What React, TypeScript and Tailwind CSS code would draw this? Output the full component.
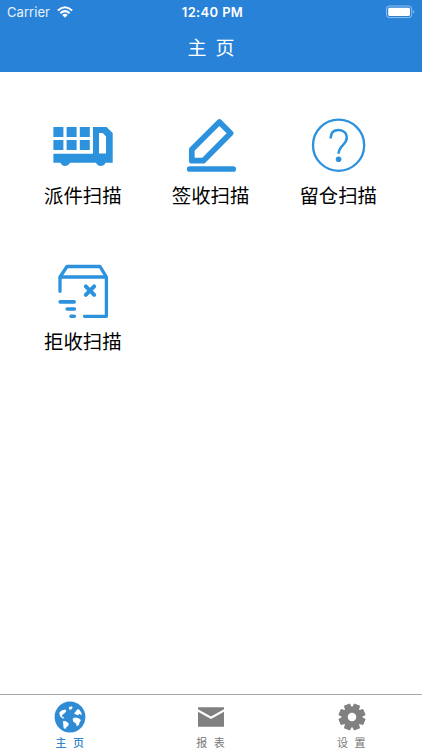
import type { ReactNode } from 'react';

const BLUE = '#2d92dd';

function TruckIcon() {
  return (
    <svg width="64" height="64" viewBox="0 0 64 64" fill={BLUE}>
      {[2.4, 15.6, 28.8].map((x) =>
        [14, 27].map((y) => <rect key={`${x}-${y}`} x={x} y={y} width="10" height="10" />),
      )}
      <path
        fillRule="evenodd"
        d="M2.4 40.8H42V14H55.5L61.7 20V49.7H54.5Q53 53 49.8 53T45 49.7H19Q17 53 14 53T9.5 49.7H2.4ZM48 20V40.4H55V23.5L51.8 20Z"
      />
    </svg>
  );
}

function PencilIcon() {
  return (
    <svg width="64" height="64" viewBox="0 0 64 64" fill="none" stroke={BLUE} strokeWidth="5.7" strokeLinejoin="round" strokeLinecap="round">
      <path d="M40.4 8.9L51.6 20.2L24.3 47.7H12.8V36.4Z" />
      <path d="M10.7 56H54.2" />
    </svg>
  );
}

function QuestionIcon() {
  return (
    <svg width="64" height="64" viewBox="0 0 64 64" fill="none" stroke={BLUE} strokeWidth="2.3">
      <circle cx="32.6" cy="32.2" r="25.6" />
      <path d="M24.6 25.5C24.6 19.6 27.8 17 32.6 17C37.6 17 40.8 20.4 40.8 24.6C40.8 32 32.6 32.2 32.6 40.8" strokeWidth="2.5" />
      <circle cx="32.6" cy="46.3" r="2.8" fill={BLUE} stroke="none" />
    </svg>
  );
}

function BoxIcon() {
  return (
    <svg width="64" height="64" viewBox="0 0 64 64" fill="none" stroke={BLUE} strokeWidth="3.6" strokeLinejoin="round" strokeLinecap="round">
      <path d="M9 32.3V18L16 7.5H49L55.4 18V57.3H33.5M9 18H55.4" strokeWidth="3.3" />
      <path d="M34.8 27.3L43.2 35.8M43.2 27.3L34.8 35.8" strokeWidth="4" />
      <path d="M9.2 42.9H23.2M16.2 50H23.4M20 57.2H23.3" />
    </svg>
  );
}

function GlobeIcon() {
  return (
    <svg width="32" height="32" viewBox="0 0 32 32">
      <circle cx="16" cy="16" r="15.4" fill="#2f8bd4" />
      <g fill="#fff">
        <path d="M5.3 11.5L8 9.2L11.2 8.6L12.4 10L10.6 12.2L8.8 13.4L7.6 15.2L9.4 16L10.4 17.4L8.4 17.2L6 15.3Z" />
        <path d="M14.8 6.2L17.2 5.2L18.8 6.2L17.2 8.4L15.4 8.8Z" />
        <path d="M20 12.5L21.8 10.6L23.2 8.2L25.2 8.4L27.2 11.4L27.8 14.3L25.4 13.1L23.8 14.2L22 13.4Z" />
        <path d="M8.8 20.3L11.5 20L14.8 22.4L14.2 24.8L12.4 26.2L11.2 28.2L9.5 26.5L9.3 23.5Z" />
        <path d="M18.6 17.8L21 16.5L24.2 17.1L27 18.9L25.7 21.2L24.8 24L22.8 25.3L21.8 22.2L19.3 20.7Z" />
      </g>
    </svg>
  );
}

function MailIcon() {
  return (
    <svg width="32" height="32" viewBox="0 0 32 32" fill="#808080">
      <path d="M3 6.3H29V8.3L16 15.6L3 8.3Z" />
      <path d="M3 10.7L16 18L29 10.7V25.7H3Z" />
    </svg>
  );
}

function GearIcon() {
  return (
    <svg width="32" height="32" viewBox="0 0 32 32">
      <g fill="#808080">
        <circle cx="16" cy="16" r="10.3" />
        {[22.5, 67.5, 112.5, 157.5, 202.5, 247.5, 292.5, 337.5].map((angle) => (
          <path key={angle} d="M12.2 8L12.7 3.2Q12.8 2.6 13.4 2.6H18.6Q19.2 2.6 19.3 3.2L19.8 8Z" transform={`rotate(${angle} 16 16)`} />
        ))}
      </g>
      <circle cx="16" cy="16" r="4.3" fill="#fff" />
    </svg>
  );
}

function StatusBar() {
  return (
    <div className="grid h-6 grid-cols-3 items-center px-[7px] font-[Inter,sans-serif] text-[13px] leading-6 text-white">
      <div className="flex items-center gap-[7px]">
        <span className="tracking-[0.05px] text-white/90">Carrier</span>
        <svg width="16" height="12" viewBox="0 0 16 12" fill="none" stroke="#fff" strokeWidth="2.1">
          <path d="M.9 4.5Q8-2 15.1 4.5M3.4 7.2Q8 3.1 12.6 7.2" />
          <path d="M5.3 9Q8 6.5 10.7 9L8 11.7Z" fill="#fff" stroke="none" />
        </svg>
      </div>
      <span className="pl-[3px] text-center font-semibold tracking-[0.35px] whitespace-nowrap">12:40 PM</span>
      <svg className="justify-self-end" width="30" height="14" viewBox="0 0 30 14">
        <rect x="1.5" y="1" width="25.2" height="11.6" rx="3" fill="none" stroke="#fff" strokeOpacity=".5" />
        <rect x="3.2" y="2.7" width="21.8" height="8.2" rx="1.4" fill="#fff" />
        <path d="M28.2 5Q30.4 6.8 28.2 8.6Z" fill="#fff" fillOpacity=".55" />
      </svg>
    </div>
  );
}

function Action({ icon, label }: { icon: ReactNode; label: string }) {
  return (
    <button className="flex h-[146px] flex-col items-center">
      {icon}
      <span className="mt-[3px] text-[19.4px] leading-[30px] whitespace-nowrap text-black">{label}</span>
    </button>
  );
}

function Tab({ icon, label, active = false }: { icon: ReactNode; label: string; active?: boolean }) {
  return (
    <button className={`flex flex-col items-center pt-[6px] text-[11px] leading-4 ${active ? 'font-medium text-[#2f84ca]' : 'text-[#777777]'}`}>
      {icon}
      <span className="mt-[1px] pr-px [word-spacing:0.8px] whitespace-pre">{label}</span>
    </button>
  );
}

export default function App() {
  return (
    <div className="flex h-[750px] w-[422px] flex-col overflow-hidden bg-white font-['Noto_Sans_CJK_SC',sans-serif]">
      <header className="h-[72px] shrink-0 bg-[#2882d7]">
        <StatusBar />
        <h1 className="text-center text-[19px] leading-[46px] font-normal [word-spacing:0.2px] whitespace-pre text-white">主  页</h1>
      </header>
      <main className="grid flex-1 grid-cols-[repeat(3,127.7px)] content-start px-[19px] pt-[41px]">
        <Action icon={<TruckIcon />} label="派件扫描" />
        <Action icon={<PencilIcon />} label="签收扫描" />
        <Action icon={<QuestionIcon />} label="留仓扫描" />
        <Action icon={<BoxIcon />} label="拒收扫描" />
      </main>
      <nav className="grid h-14 shrink-0 grid-cols-3 border-t border-[#a8a8a8]">
        <Tab icon={<GlobeIcon />} label="主  页" active />
        <Tab icon={<MailIcon />} label="报  表" />
        <Tab icon={<GearIcon />} label="设  置" />
      </nav>
    </div>
  );
}
